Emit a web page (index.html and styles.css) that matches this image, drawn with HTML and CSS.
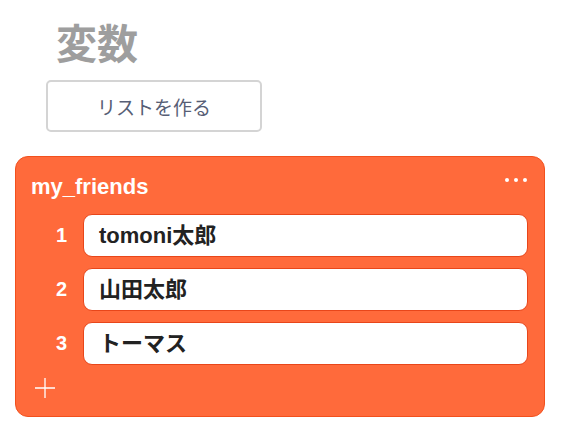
FILE: index.html
```html
<!DOCTYPE html>
<html lang="ja">
<head>
<meta charset="utf-8">
<link rel="stylesheet" href="styles.css">
</head>
<body>
<div class="page">
  <h1 class="title">変数</h1>
  <button class="make-list">リストを作る</button>
  <div class="list-card">
    <div class="list-head">
      <span class="list-name">my_friends</span>
      <span class="menu"><i></i><i></i><i></i></span>
    </div>
    <div class="rows">
      <div class="row"><span class="idx">1</span><div class="item">tomoni太郎</div></div>
      <div class="row"><span class="idx">2</span><div class="item">山田太郎</div></div>
      <div class="row"><span class="idx">3</span><div class="item">トーマス</div></div>
    </div>
    <div class="add">
      <svg width="22" height="22" viewBox="0 0 22 22"><path d="M11 1V21M1 11H21" stroke="#fff" stroke-width="1.3" fill="none"/></svg>
    </div>
  </div>
</div>
</body>
</html>
```
FILE: styles.css
```css
html, body { margin: 0; padding: 0; background: #fff; }
body { font-family: "Liberation Sans", "Noto Sans CJK JP", sans-serif; }
.page { padding-top: 12px; display: flex; flex-direction: column; align-items: flex-start; }
.title {
  margin: 0 0 0 56px;
  font-size: 41px;
  line-height: 58px;
  height: 58px;
  font-weight: bold;
  color: #9e9e9e;
  font-family: "Noto Sans CJK JP", sans-serif;
}
.make-list {
  margin: 10px 0 0 46px;
  width: 216px;
  height: 52px;
  box-sizing: border-box;
  border: 2px solid #d4d4d4;
  border-radius: 5px;
  background: #fff;
  font-family: "Noto Sans CJK JP", sans-serif;
  font-size: 19px;
  color: #575e75;
  padding: 0;
}
.list-card {
  margin: 24px 0 0 15px;
  width: 530px;
  height: 261px;
  box-sizing: border-box;
  background: #ff6a3b;
  border: 1px solid #f2501d;
  border-radius: 13px;
  padding: 0 16px 0 0;
  display: flex;
  flex-direction: column;
}
.list-head {
  height: 57px;
  display: flex;
  justify-content: space-between;
  align-items: flex-start;
  padding-left: 15px;
}
.list-name {
  margin-top: 16px;
  color: #fff;
  font-weight: bold;
  font-size: 22px;
  line-height: 28px;
}
.menu { display: flex; gap: 5px; margin-top: 21px; margin-right: 1px; }
.menu i { width: 4px; height: 4px; border-radius: 50%; background: #fff; display: block; }
.rows { display: flex; flex-direction: column; gap: 11px; }
.row { display: flex; align-items: center; height: 43px; }
.idx {
  width: 67px;
  text-align: center;
  padding-left: 24px;
  box-sizing: border-box;
  color: #fff;
  font-weight: bold;
  font-size: 20px;
}
.item {
  flex: 1;
  height: 43px;
  box-sizing: border-box;
  background: #fff;
  border: 1px solid #e8461a;
  border-radius: 9px;
  padding-left: 15px;
  font-weight: bold;
  font-size: 22px;
  line-height: 41px;
  color: #222;
}
.add { padding: 12px 0 0 18px; height: 22px; }
.add svg { display: block; }
```
